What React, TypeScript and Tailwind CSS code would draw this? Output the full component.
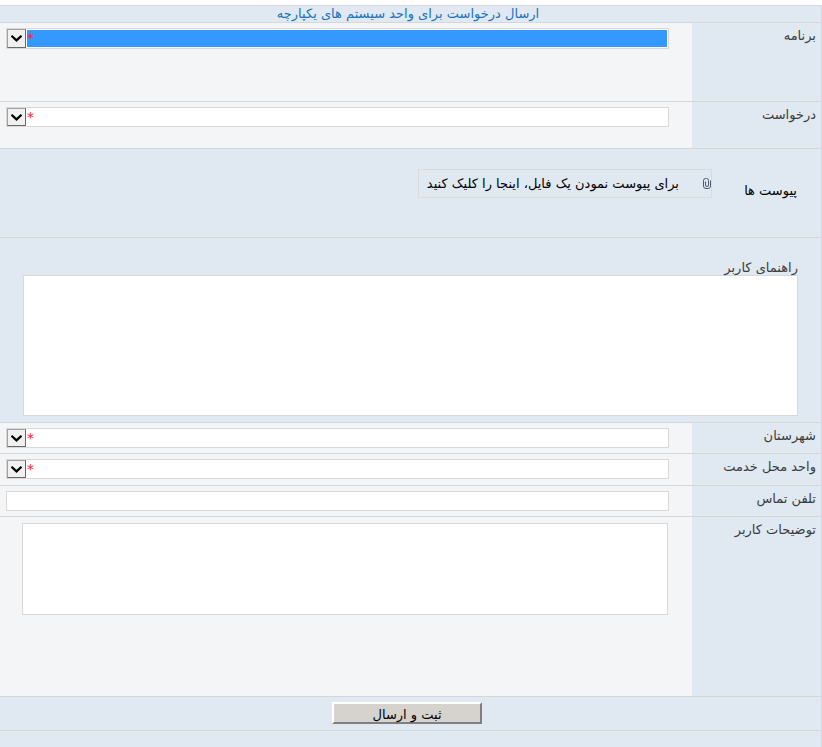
import type { ReactNode } from "react";

function Field({ id, label, className, children }: { id: string; label: string; className: string; children: ReactNode }) {
  return (
    <div className={`flex border-t border-[#d6d7d8] ${className}`}>
      <label htmlFor={id} className="w-[129px] shrink-0 pt-[3px] pr-[5px] leading-5 text-[#3c3c3c]">
        {label}
      </label>
      <div className="min-w-0 flex-1 bg-[#f4f5f7] pt-[5px] pr-[23px] pl-[6px]">{children}</div>
    </div>
  );
}

function Combo({ id, active = false }: { id: string; active?: boolean }) {
  return (
    <div className={`relative border border-[#d8d8d8] bg-white ${active ? "h-[21px]" : "h-5"}`}>
      <select
        id={id}
        required
        className={`block h-full w-full appearance-none bg-clip-content py-px pr-px pl-[20px] outline-none ${active ? "bg-[#3399ff]" : "bg-white"}`}
      >
        <option value=""></option>
      </select>
      <span className="pointer-events-none absolute top-0 left-0 flex h-full w-[19px] items-center justify-center border border-t-[#a0a0a0] border-r-[#696969] border-b-[#696969] border-l-[#a0a0a0] bg-[#f0f0f0]">
        <svg className="shrink-0" width="11" height="7" viewBox="0 0 11 7" fill="none" stroke="#000" strokeWidth="2.2">
          <path d="M0.5 0.8 L5.5 5.4 L10.5 0.8" />
        </svg>
      </span>
      <span className="pointer-events-none absolute top-0 left-[20px] text-[14px] leading-[18px] text-[#ff2020]">*</span>
    </div>
  );
}

export default function App() {
  return (
    <div className="min-h-screen bg-white pt-[5px] font-['DejaVu_Sans',Tahoma,sans-serif] text-[13px]" dir="rtl">
      <form
        className="flex min-h-[calc(100vh-5px)] flex-col border-r border-[#d6d7d8] bg-[#e0e8f2]"
        onSubmit={(e) => e.preventDefault()}
      >
        <h1 className="h-[17px] border-t border-[#d6d7d8] pr-[5px] text-center leading-4 text-[#1a73b8]">
          ارسال درخواست برای واحد سیستم های یکپارچه
        </h1>
        <Field id="app" label="برنامه" className="h-[79px]">
          <Combo id="app" active />
        </Field>
        <Field id="request" label="درخواست" className="h-[47px]">
          <Combo id="request" />
        </Field>
        <div className="flex h-[89px] items-start border-t border-[#d6d7d8] pt-5 pr-6 text-black">
          <span className="w-[85px] shrink-0 pt-3 leading-5">پیوست ها</span>
          <button type="button" className="flex h-[29px] w-[294px] items-center border border-[#d9dadc]">
            <svg className="-mt-px shrink-0" width="8" height="11" viewBox="0 0 8 11" fill="none" stroke="#4c5a70" strokeWidth="1">
              <path d="M2.5 3.5 V7 a1.5 1.5 0 0 0 3 0 V2.5 a2 2 0 0 0 -2 -2 h-1 a2 2 0 0 0 -2 2 V8 a2.5 2.5 0 0 0 2.5 2.5 h2 a2.5 2.5 0 0 0 2.5 -2.5 V2.5" />
            </svg>
            <span className="flex-1 pr-6 text-right whitespace-nowrap">برای پیوست نمودن یک فایل، اینجا را کلیک کنید</span>
          </button>
        </div>
        <div className="h-[185px] border-t border-[#d6d7d8] px-[23px] pt-5">
          <label htmlFor="guide" className="block h-[17px] leading-5 text-[#3c3c3c]">
            راهنمای کاربر
          </label>
          <textarea id="guide" className="block h-[141px] w-full resize-none border border-[#d8d8d8] bg-white outline-none" />
        </div>
        <Field id="city" label="شهرستان" className="h-[31px]">
          <Combo id="city" />
        </Field>
        <Field id="unit" label="واحد محل خدمت" className="h-[32px]">
          <Combo id="unit" />
        </Field>
        <Field id="phone" label="تلفن تماس" className="h-[31px]">
          <input id="phone" type="tel" className="block h-5 w-full border border-[#d8d8d8] bg-white outline-none" />
        </Field>
        <Field id="notes" label="توضیحات کاربر" className="h-[180px]">
          <div className="pt-px pr-px pl-4">
            <textarea id="notes" className="block h-[92px] w-full resize-none border border-[#d8d8d8] bg-white outline-none" />
          </div>
        </Field>
        <div className="flex h-[34px] justify-center border-t border-[#d6d7d8] pt-[5px] pr-[7px]">
          <button
            type="submit"
            className="h-[22px] w-[150px] border-2 border-t-white border-r-[#808080] border-b-[#808080] border-l-white bg-[#d6d3ce] pt-[3px] leading-4 text-black"
          >
            ثبت و ارسال
          </button>
        </div>
        <div className="min-h-4 flex-1 border-t border-[#d6d7d8]" />
      </form>
    </div>
  );
}
